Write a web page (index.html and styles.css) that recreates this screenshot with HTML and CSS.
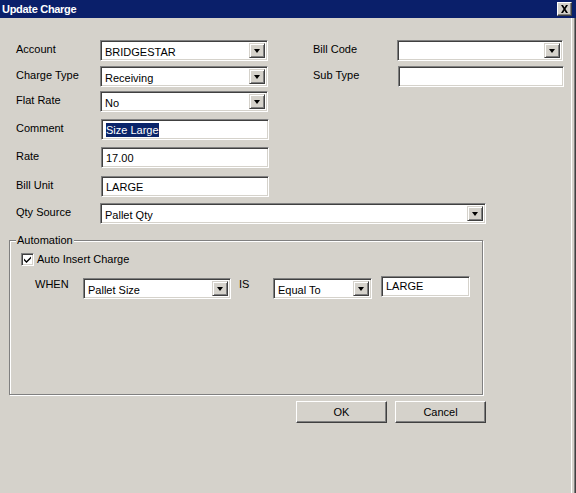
FILE: index.html
```html
<!DOCTYPE html>
<html>
<head>
<meta charset="utf-8">
<link rel="stylesheet" href="styles.css">
</head>
<body>
<div class="window">
  <div class="titlebar">
    <span class="title">Update Charge</span>
    <span class="close"><svg width="9" height="8" viewBox="0 0 9 8"><path d="M1 0h2l1.5 2.5L6 0h2L5.5 4 8 8H6L4.5 5.5 3 8H1l2.5-4z" fill="#000"/></svg></span>
  </div>
  <div class="content">
    <div class="row r1">
      <span class="label">Account</span>
      <div class="select w168"><span class="val">BRIDGESTAR</span><span class="arrow"><i></i></span></div>
      <span class="label right">Bill Code</span>
      <div class="select w166"><span class="val"></span><span class="arrow"><i></i></span></div>
    </div>
    <div class="row r2">
      <span class="label">Charge Type</span>
      <div class="select w168"><span class="val">Receiving</span><span class="arrow"><i></i></span></div>
      <span class="label right">Sub Type</span>
      <div class="input w166 shift"></div>
    </div>
    <div class="row r3">
      <span class="label">Flat Rate</span>
      <div class="select w168"><span class="val">No</span><span class="arrow"><i></i></span></div>
    </div>
    <div class="row r4">
      <span class="label">Comment</span>
      <div class="input w168 shift"><span class="sel">Size Large</span></div>
    </div>
    <div class="row r5">
      <span class="label">Rate</span>
      <div class="input w168 shift">17.00</div>
    </div>
    <div class="row r6">
      <span class="label">Bill Unit</span>
      <div class="input w168 shift">LARGE</div>
    </div>
    <div class="row r7">
      <span class="label">Qty Source</span>
      <div class="select w386"><span class="val">Pallet Qty</span><span class="arrow"><i></i></span></div>
    </div>

    <div class="group">
      <span class="legend">Automation</span>
      <div class="check-row">
        <span class="checkbox"><svg width="9" height="9" viewBox="0 0 9 9"><path d="M1 3.5l2.5 2.5L8 1.5V3.5L3.5 8L1 5.5z" fill="#000"/></svg></span>
        <span class="check-label">Auto Insert Charge</span>
      </div>
      <div class="when-row">
        <span class="when">WHEN</span>
        <div class="select w148"><span class="val">Pallet Size</span><span class="arrow"><i></i></span></div>
        <span class="is">IS</span>
        <div class="select w99"><span class="val">Equal To</span><span class="arrow"><i></i></span></div>
        <div class="input w89 value">LARGE</div>
      </div>
    </div>

    <div class="buttons">
      <span class="btn">OK</span>
      <span class="btn">Cancel</span>
    </div>
  </div>
</div>
</body>
</html>
```

FILE: styles.css
```css
html, body {
  margin: 0;
  padding: 0;
  background: #d5d2cb;
  overflow: hidden;
}

.window {
  width: 576px;
  height: 493px;
  box-sizing: border-box;
  background: #d5d2cb;
  font-family: "Liberation Sans", Arial, sans-serif;
  font-size: 11px;
  color: #000;
  box-shadow: inset -1px 0 #404040, inset -2px 0 #808080, inset -4px 0 #d5d2cb, inset -5px 0 #ffffff;
}

.titlebar {
  height: 18px;
  background: #0a1f6a;
  display: flex;
  align-items: center;
  justify-content: space-between;
  padding: 0 4px 0 2px;
  box-sizing: border-box;
}

.title {
  color: #fff;
  font-weight: bold;
  font-size: 11px;
  letter-spacing: -0.3px;
}

.close {
  width: 15px;
  height: 14px;
  box-sizing: border-box;
  background: #d5d2cb;
  border-top: 1px solid #fff;
  border-left: 1px solid #fff;
  border-right: 1px solid #404040;
  border-bottom: 1px solid #404040;
  box-shadow: inset -1px -1px #808080;
  display: flex;
  align-items: center;
  justify-content: center;
}

.content {
  padding: 22px 0 0 16px;
}

.row {
  display: flex;
  align-items: center;
  height: 21px;
}

.r2 { margin-top: 5px; }
.r3 { margin-top: 4px; }
.r4 { margin-top: 7px; }
.r5 { margin-top: 7px; }
.r6 { margin-top: 8px; }
.r7 { margin-top: 6px; }

.label {
  width: 84px;
  flex: none;
  margin-top: -4px;
}

.label.right {
  margin-left: 45px;
}

.select, .input {
  height: 21px;
  box-sizing: border-box;
  background: #fff;
  border-top: 1px solid #808080;
  border-left: 1px solid #808080;
  border-right: 1px solid #fff;
  border-bottom: 1px solid #fff;
  box-shadow: inset 1px 1px #404040, inset -1px -1px #d5d2cb;
  flex: none;
}

.select {
  display: flex;
}

.select .val {
  flex: 1;
  padding: 5px 0 0 4px;
  white-space: nowrap;
}

.select .arrow {
  width: 16px;
  margin: 2px;
  box-sizing: border-box;
  background: #d5d2cb;
  border-top: 1px solid #d5d2cb;
  border-left: 1px solid #d5d2cb;
  border-right: 1px solid #404040;
  border-bottom: 1px solid #404040;
  box-shadow: inset 1px 1px #fff, inset -1px -1px #808080;
  display: flex;
  align-items: center;
  justify-content: center;
}

.select .arrow i {
  width: 0;
  height: 0;
  border-left: 3.5px solid transparent;
  border-right: 3.5px solid transparent;
  border-top: 4px solid #000;
}

.input {
  padding: 4px 0 0 4px;
  white-space: nowrap;
}

.input.shift { margin-left: 1px; }

.w168 { width: 168px; }
.w166 { width: 166px; }
.w386 { width: 386px; }
.w148 { width: 148px; }
.w99 { width: 99px; }
.w89 { width: 89px; }

.sel {
  background: #0a246a;
  color: #fff;
  padding: 1px 0;
}

.group {
  margin: 16px 0 0 -7px;
  width: 474px;
  height: 155px;
  box-sizing: border-box;
  border: 1px solid #808080;
  box-shadow: 1px 1px #fff, inset 1px 1px #fff;
  position: relative;
  padding: 12px 0 0 11px;
}

.legend {
  position: absolute;
  left: 6px;
  top: -7px;
  background: #d5d2cb;
  padding: 0 1px;
}

.check-row {
  display: flex;
  align-items: center;
  height: 13px;
}

.checkbox {
  width: 13px;
  height: 13px;
  box-sizing: border-box;
  background: #fff;
  border-top: 1px solid #808080;
  border-left: 1px solid #808080;
  border-right: 1px solid #fff;
  border-bottom: 1px solid #fff;
  box-shadow: inset 1px 1px #404040, inset -1px -1px #d5d2cb;
  display: flex;
  align-items: center;
  justify-content: center;
  margin-right: 3px;
}

.check-label {
  margin-top: -1px;
}

.when-row {
  display: flex;
  align-items: flex-start;
  margin-top: 10px;
  padding-left: 14px;
}

.when-row .select { margin-top: 2px; }

.when {
  width: 48px;
  flex: none;
  padding-top: 2px;
}

.is {
  width: 34px;
  margin-left: 8px;
  flex: none;
  padding-top: 2px;
}

.value {
  margin-left: 9px;
  padding-top: 3px;
}

.buttons {
  display: flex;
  gap: 8px;
  margin: 6px 0 0 280px;
}

.btn {
  width: 91px;
  height: 22px;
  box-sizing: border-box;
  background: #d5d2cb;
  border-top: 1px solid #fff;
  border-left: 1px solid #fff;
  border-right: 1px solid #404040;
  border-bottom: 1px solid #404040;
  box-shadow: inset -1px -1px #808080;
  display: flex;
  align-items: center;
  justify-content: center;
}
```
